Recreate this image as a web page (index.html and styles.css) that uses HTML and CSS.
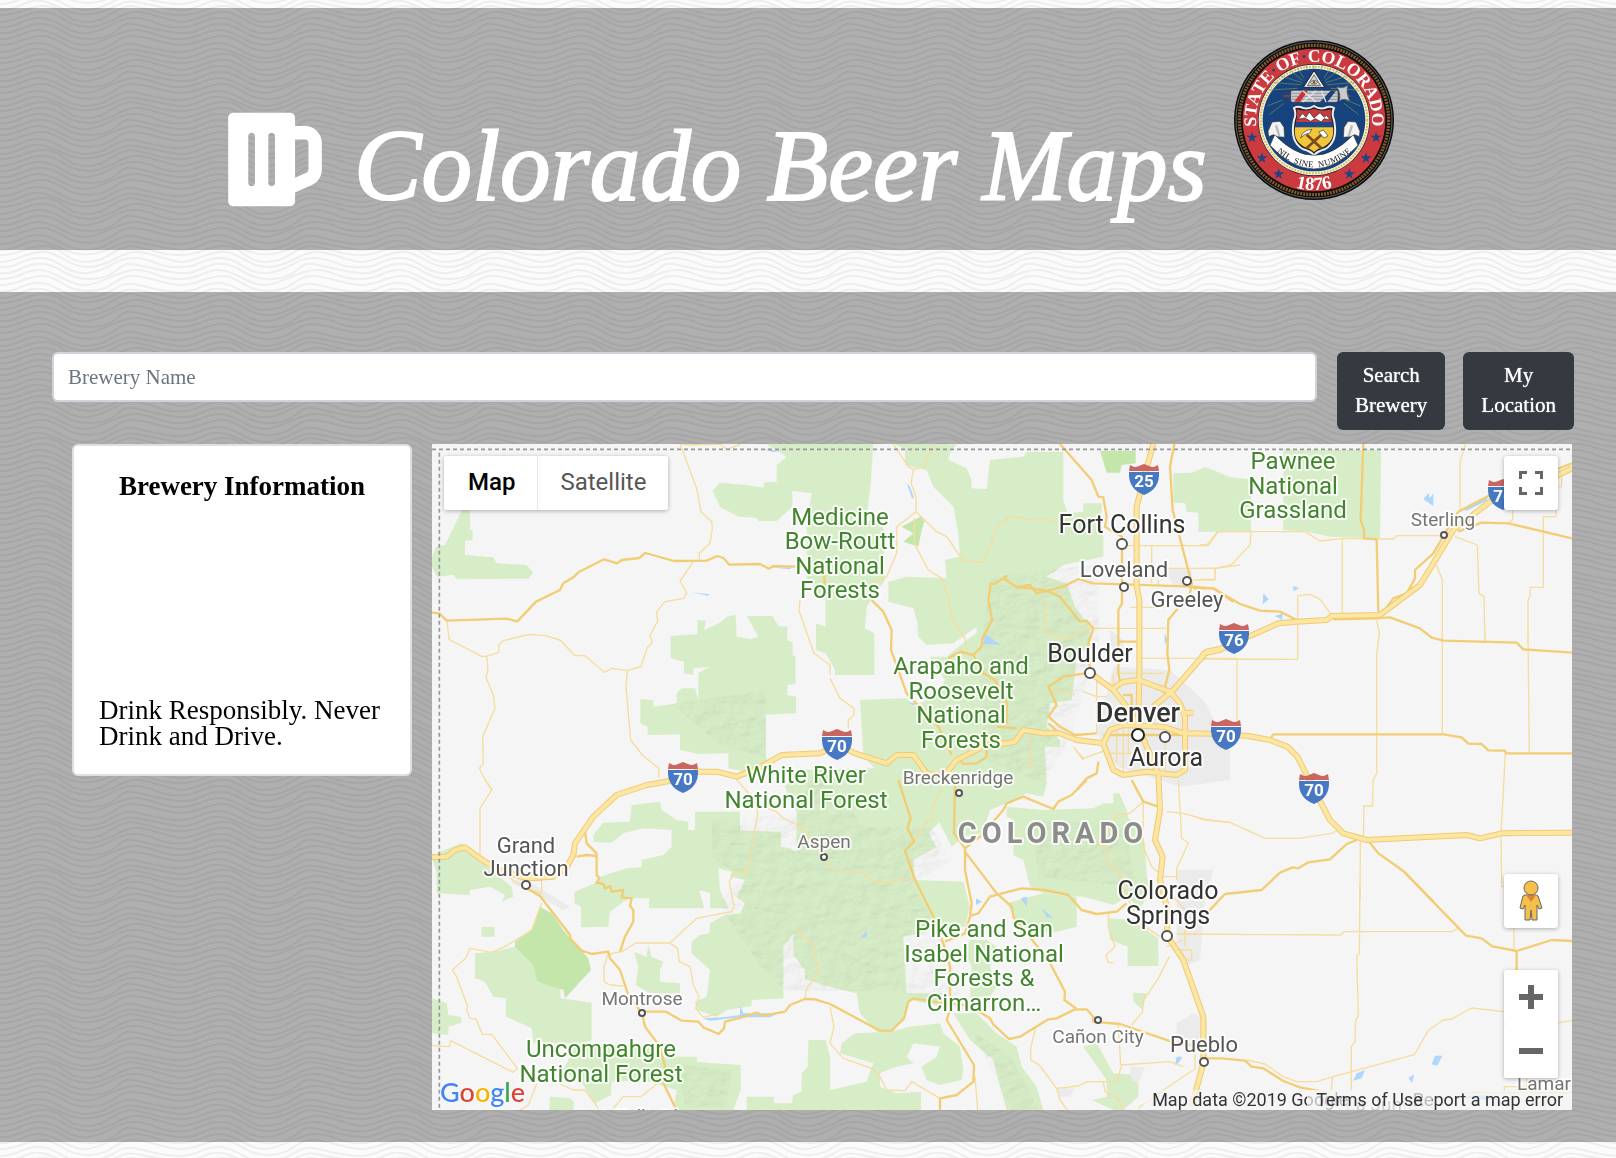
FILE: index.html
```html
<!DOCTYPE html>
<html lang="en">
<head>
<meta charset="utf-8">
<meta name="viewport" content="width=device-width, initial-scale=1">
<title>Colorado Beer Maps</title>
<link rel="stylesheet" href="styles.css">
</head>
<body>
<header class="masthead">
  <h1 class="title"><svg class="mug" viewBox="0 0 448 512" aria-hidden="true"><path fill="#fff" d="M368 96h-48V56c0-13.255-10.745-24-24-24H24C10.745 32 0 42.745 0 56v400c0 13.255 10.745 24 24 24h272c13.255 0 24-10.745 24-24v-42.11l80.606-35.977C429.396 365.063 448 336.388 448 304.86V176c0-44.112-35.888-80-80-80zm16 208.86a16.018 16.018 0 0 1-9.479 14.611L320 343.805V160h48c8.822 0 16 7.178 16 16v128.86zM208 384c-8.836 0-16-7.164-16-16V144c0-8.836 7.164-16 16-16s16 7.164 16 16v224c0 8.836-7.164 16-16 16zm-96 0c-8.836 0-16-7.164-16-16V144c0-8.836 7.164-16 16-16s16 7.164 16 16v224c0 8.836-7.164 16-16 16z"/></svg>Colorado Beer Maps</h1>
  <svg class="seal" viewBox="0 0 480 480" role="img" aria-label="Seal of the State of Colorado">
    <defs>
      <path id="arc-top" d="M77 300a174 174 0 1 1 326 0"/>
      <path id="arc-bottom" d="M30 240a210 210 0 0 0 420 0"/>
      <path id="arc-ribbon" d="M112 304Q240 436 368 304"/>
      <path id="star" d="M0-17 4-5H17L6 3 10 15 0 7-10 15-6 3-17-5H-4Z"/>
    </defs>
    <circle cx="240" cy="240" r="240" fill="#0d0d0d"/>
    <circle cx="240" cy="240" r="234" fill="none" stroke="#8b8b8b" stroke-width="2"/>
    <circle cx="240" cy="240" r="224" fill="none" stroke="#7d5a2c" stroke-width="10" stroke-dasharray="6 3"/>
    <circle cx="240" cy="240" r="214" fill="#cb3a3e"/>
    <circle cx="240" cy="240" r="168" fill="#222"/>
    <circle cx="240" cy="240" r="166" fill="#f7f3e2"/>
    <circle cx="240" cy="240" r="160" fill="none" stroke="#d5b74c" stroke-width="6" stroke-dasharray="5 4"/>
    <circle cx="240" cy="240" r="154" fill="#16427d"/>
    <g stroke="#79944f" stroke-width="2">
      <path d="M205 128 140 108M207 122 158 84M210 114 186 78M275 128 340 108M273 122 322 84M270 114 294 78M200 134 120 128M280 134 360 128M190 145 108 150M290 145 372 150M150 190 106 224M330 190 374 224M145 180 100 198M335 180 380 198M240 86V76M222 92 214 76M258 92 266 76"/>
    </g>
    <path d="M240 92 272 142H208Z" fill="#f6f6f6" stroke="#222" stroke-width="3"/>
    <path d="M240 104 260 137H220Z" fill="#cfcfcf" stroke="#333" stroke-width="2"/>
    <ellipse cx="240" cy="127" rx="10" ry="5" fill="#fff" stroke="#222" stroke-width="2"/><circle cx="240" cy="127" r="4" fill="#7a5530"/>
    <path d="M148 168H348" stroke="#6e4a2c" stroke-width="7"/>
    <rect x="170" y="151" width="142" height="36" rx="6" fill="#c9cbd0" stroke="#333" stroke-width="2"/>
    <path d="M172 160H310M172 169H310M172 178H310" stroke="#777b84" stroke-width="2"/>
    <path d="M180 185 206 152H222L198 186Z" fill="#c8343c"/><path d="M258 186 290 152H306L280 186Z" fill="#1d3f77"/>
    <path d="M206 152 246 186M246 152 206 186M262 152 276 186" stroke="#e4e4e4" stroke-width="4"/>
    <path d="M308 140Q326 148 342 136Q334 156 348 184Q328 172 316 184Q322 160 308 140Z" fill="#c6ccd2" stroke="#555" stroke-width="2"/>
    <path d="M180 204Q190 196 208 204Q224 208 240 198Q256 208 272 204Q290 196 300 204Q292 222 300 240Q314 306 272 328Q250 334 240 346Q230 334 208 328Q166 306 180 240Q188 222 180 204Z" fill="#1f2227" stroke="#eee" stroke-width="6"/>
    <path d="M188 208Q214 216 240 206Q266 216 292 208Q288 222 294 246H186Q192 222 188 208Z" fill="#c93a3e"/>
    <path d="M192 238 206 220 216 232 226 216 240 234 258 218 270 232 278 226 288 240 270 236 262 246 244 236 230 244 212 234Z" fill="#fff" stroke="#222" stroke-width="2"/>
    <path d="M186 246H294L298 262H182Z" fill="#1c4a8c"/>
    <path d="M183 262H297Q302 304 270 320Q250 326 240 336Q230 326 210 320Q178 304 183 262Z" fill="#f1c63a"/>
    <path d="M262 284 216 326M218 284 264 326" stroke="#7b4a22" stroke-width="8"/>
    <path d="M200 294Q206 270 234 268L226 280Q212 280 200 294Z" fill="#fff" stroke="#333" stroke-width="2"/>
    <path d="M254 276 268 270 282 288 270 294Z" fill="#fff" stroke="#333" stroke-width="2"/>
    <path d="M122 284Q240 408 358 284L372 316Q240 458 108 316Z" fill="#fff" stroke="#333" stroke-width="2"/>
    <path d="M102 274 114 246 138 244 150 262 152 292 130 290 118 284 104 290Z" fill="#f3f3f3" stroke="#333" stroke-width="2"/>
    <path d="M378 274 366 246 342 244 330 262 328 292 350 290 362 284 376 290Z" fill="#f3f3f3" stroke="#333" stroke-width="2"/>
    <path d="M126 256 136 288M354 256 344 288" stroke="#bbb" stroke-width="7"/>
    <g fill="#1c4484">
      <use href="#star" x="54" y="292"/><use href="#star" x="84" y="354"/><use href="#star" x="134" y="402"/>
      <use href="#star" x="426" y="292"/><use href="#star" x="396" y="354"/><use href="#star" x="346" y="402"/>
    </g>
    <text class="seal-name"><textPath href="#arc-top" startOffset="50%">STATE<tspan fill="#1c4484">·</tspan>OF<tspan fill="#1c4484">·</tspan>COLORADO</textPath></text>
    <text class="seal-year"><textPath href="#arc-bottom" startOffset="50%">1876</textPath></text>
    <text class="seal-motto" dy="12"><textPath href="#arc-ribbon" startOffset="50%">NIL&#160; SINE&#160; NUMINE</textPath></text>
  </svg>
</header>

<main class="finder">
  <form class="search">
    <input class="search-input" type="text" placeholder="Brewery Name" aria-label="Brewery Name">
    <button class="btn" type="button">Search<br>Brewery</button>
    <button class="btn" type="button">My<br>Location</button>
  </form>
  <div class="results">
    <aside class="card">
      <h2 class="card-title">Brewery Information</h2>
      <p class="card-note">Drink Responsibly. Never Drink and Drive.</p>
    </aside>
    <section class="map" aria-label="Map of Colorado">
      <svg class="layer" viewBox="0 0 3420 1998" preserveAspectRatio="xMidYMid slice" aria-hidden="true">
        <defs>
          <filter id="relief" x="0" y="0" width="100%" height="100%">
            <feTurbulence type="fractalNoise" baseFrequency="0.02 0.03" numOctaves="3" seed="8" result="noise"/>
            <feDiffuseLighting in="noise" surfaceScale="9" lighting-color="#fff" result="light"><feDistantLight azimuth="225" elevation="55"/></feDiffuseLighting>
            <feComposite in="light" in2="SourceAlpha" operator="in"/>
          </filter>
          <g id="hills">
            <path d="M840 1130 1100 1110 1150 960 1300 1150 1500 1150 1560 1250 1440 1320 1540 1500 1600 1700 1400 1640 1260 1640 1060 1640 980 1560 860 1380 930 1300 840 1240Z"/>
            <path d="M1680 400 2000 360 2000 600 1920 860 1840 1020 1660 950 1640 640Z"/>
            <path d="M720 780 1000 740 1000 940 860 900Z"/>
            <path d="M1620 1760 1740 1840 1820 1998H1740Z"/>
            <path d="M740 1860 900 1880 880 1990H760Z"/><path d="M1800 1130 2080 1140 2110 1330 1820 1300Z"/>
          </g>
        </defs>
        <g class="park">
          <g transform="translate(-6 -12)">
            <path d="M96 210H120V270H128V300L105 302V345L190 352 200 370 290 375 310 398 295 416 80 418 70 405 20 410 6 380V350L18 320 45 315Z"/>
            <path d="M1010 12H1330L1322 130 1310 240 1360 250 1365 420 1310 500 1305 565 1333 580V705H1215V690L1187 640 1158 630V550L1187 560V480L1130 420V250L1145 160 1087 153V200L1040 243H985L980 233 925 230 870 200 847 152 870 128 950 135 1000 143 1003 127 1040 125V75L1070 50Z"/>
            <path d="M722 588 802 583V540L828 542 822 570 870 548 890 530 917 524 920 590 960 597 985 590 950 528H1027L1045 558 1072 560V600L1088 607V645L1097 650V732L1072 735V765L1098 770V820L1008 824V945L1012 975 985 980 970 1000 895 985V940L808 942 750 930V883L653 885V860L631 850V778L670 780V800L740 790V760L755 745H795L805 780V700L840 680 790 685V705L762 700V665L722 655Z"/>
          </g>
          <g transform="translate(1194 -12)">
            <path d="M195 12H380L360 40 355 60 410 85 425 120V145L470 147 480 60 580 50 590 35H700V180L713 220 760 215V190H815V255L820 290V350L700 375 650 410 710 430 735 500 780 560V620L740 640 735 700 725 780 660 790 650 860 690 900V920H645L650 1030 640 1070 590 1060 530 1090 480 1110 460 1180 400 1190 365 1220 330 1150 300 1050H200L100 950 90 780 230 775 250 800 330 760 345 720 300 650H350L410 600 440 580V560L370 610 290 615 265 590 262 545 250 505 175 485V425L230 410 350 415 345 360 390 350 385 280 370 200 310 140 290 90 225 75V30Z"/>
            <path d="M1030 100 1085 98 1125 82 1155 92 1200 112 1263 118V275H1105V218L1070 215 1065 190 1030 188Z"/>
            <path class="park-deep" d="M810 32H917V70L875 75 870 98H830ZM215 260 275 228 283 245 275 270 265 320 220 305 250 280Z"/>
          </g>
          <path transform="translate(2304 -342)" d="M250 360H543L540 625 390 620 320 605 250 600Z"/>
          <g transform="translate(-6 1008)">
            <path d="M490 165 520 128 600 125 605 75 690 65 695 90 740 120 775 125V150H725L640 145 580 160 545 188 490 185Z"/>
            <path d="M795 95H930V152L1053 155V200L1080 205 1100 220V95L1064 20 1110 -30 1530 -40 1535 120 1495 160 1520 200 1450 240 1455 300 1600 305 1620 380 1605 440 1500 450 1420 470 1430 640 1540 640V680L1440 660 1420 720 1380 755H1340L1290 700 1280 640 1200 620 1125 598V570L1090 525V460L1060 500V655L965 660V678L890 690 860 710 800 690 795 665 830 650 840 570 785 520V485L810 465 838 460 840 430 885 405 930 400 945 370 920 350 945 300 900 290 905 275 865 265 870 330 895 385H840V340L808 330 822 385H657V355H600L580 365 540 395 535 440 453 442V380L433 370V335L490 312 510 290 590 265 635 262V240L700 225 725 200V150H795Z"/>
            <path d="M135 520 190 515 255 500 322 560V608L390 615 392 655 485 668V780L460 790H310L305 745 228 710V655L190 650 165 605 135 595Z"/>
            <path d="M30 215 95 190 125 205 170 260 245 320 250 350 215 365 225 345 180 320 120 330 118 345 20 340V280L6 230Z"/>
            <path d="M155 441H194V470H155ZM612 515 650 530 655 495 665 530 700 545 690 570V605L750 610V640H660L617 615 625 560ZM6 655 50 670 55 705 92 710 95 728 55 740V765L6 760ZM360 950 420 955 432 965 430 990H358Z"/>
            <path d="M440 790 690 800V830H800V845L850 850 932 855V930L910 990H730L740 930 640 900 545 905 543 945 495 970 460 915 400 870Z"/>
            <path d="M1135 780H1187L1200 830V990H950V950H1030L1032 970H1085L1090 945 1115 935V880L1133 860Z"/>
            <path class="park-deep" d="M330 380 365 400 400 450 420 475 475 535 483 570 405 655 400 630 322 605 310 555 255 500V485L305 450Z"/>
          </g>
          <g transform="translate(1194 1008)">
            <path d="M240 740 330 730 340 760 390 800 400 870 395 900 330 915 290 900 275 860 320 830 330 800 250 790 230 830 250 850 200 860 150 880V920L200 940 273 935V990H0V930L110 905 130 850 30 820 35 790 75 760 180 755Z"/>
            <path d="M370 700H440L500 760 560 800 575 860 620 920 640 990H530L510 920 490 840 420 780ZM420 480H470L500 500 480 560 500 620 480 650H420L425 560 405 520Z"/>
            <path d="M530 80 640 90 790 85 820 70H850V40H868L890 90 895 115 915 125 945 190 950 290 965 330 930 385 890 350 850 375 760 350 640 340 600 320 580 240 550 225V120L530 110Z"/>
            <path d="M530 370 640 340 740 350V440L680 455 600 460 560 420ZM835 415 910 420 935 440 985 475V558H893V500L840 480ZM910 638 950 640 938 690 910 665ZM760 800 800 790 850 880 925 885V950L880 990H850L785 960 830 950V900Z"/>
          </g>
        </g>
        <g class="town">
          <path transform="translate(1194 -12)" d="M850 680 1020 690 1120 780 1200 930V1020L1050 1040 860 980 800 880ZM1000 380 1085 390 1090 440 1030 435ZM840 570 880 600V640L840 620Z"/>
          <path transform="translate(1194 1008)" d="M1040 270H1150L1125 350 1110 540 1060 560 1040 480ZM1040 730 1090 700 1130 720V800H1040ZM900 860H945L925 910 905 900ZM680 925H735L720 950H690Z"/>
          <path transform="translate(-6 1008)" d="M240 305 280 295 420 380 400 390 300 335Z"/>
        </g>
        <use class="hills" href="#hills" filter="url(#relief)"/>
        <g class="water">
          <path transform="translate(1194 -12)" d="M465 582 512 615 460 612ZM1003 580 1012 600 1005 615ZM230 130 240 140 252 175 246 175ZM235 787 258 790 250 797ZM360 985 378 970 372 985Z"/>
          <path transform="translate(2304 -342)" d="M685 490 690 505 700 490V528L670 508ZM280 768 298 775 280 784ZM190 790 206 808 188 823ZM225 858 248 850 246 870ZM790 540 865 498 860 512 800 542Z"/>
          <path transform="translate(2304 1218)" d="M705 617H727L712 647 695 643ZM460 692 470 670 495 660 485 685ZM625 685 642 673 637 698ZM780 740 860 735 900 750 820 748Z"/>
          <path transform="translate(-6 1008)" d="M820 715 880 712 930 705V675L940 700H1045L1020 712H930L840 722Z"/>
          <path transform="translate(1194 1008)" d="M438 355 456 365 438 375ZM572 355 592 350 590 380ZM635 385 670 415 650 412ZM92 472 110 452V472ZM1040 830H1058L1045 850 1035 855ZM215 300 240 295 235 303Z"/>
          <path transform="translate(-6 -12)" d="M1000 28 1055 32 1030 36ZM1022 382 1085 383 1080 388ZM788 457 838 463 834 467Z"/>
        </g>
        <g class="road-minor">
          <path transform="translate(-6 -12)" d="M750 12 800 145 813 215 845 245 847 265 840 310 808 340V360M790 365 750 423 770 458 762 475 705 485 680 515 683 543 660 587 667 608 652 622 633 680 592 692 545 685 523 697 465 647H435L390 600 345 587 295 584 220 602 206 615V637L170 649H155L57 598 51 543M170 649 174 690 168 712 190 765 195 805 158 890 160 970 148 985 160 1010 187 1050M592 692 588 740 602 900 637 945 686 985V1015M1110 480 1107 512 1152 640 1200 675V705M755 12 780 15 870 12 890 28 930 14"/>
          <path transform="translate(1194 -12)" d="M190 12 235 80 250 88 285 80 290 50 320 15M250 88 243 130 258 170V215L200 260V340L170 410 120 430M258 215 320 275 350 290 398 360 460 367 505 255 540 228 590 238 650 235 680 250 710 240M253 235V310L295 390 335 415 355 470 365 535 405 595 412 635M0 715 30 775 72 805V825L55 840V865M890 317H1135L1165 275H1230M965 317V430M1000 385H1155V420H1090M1155 385 1230 375M900 502H1015M790 565H1010M930 655H1220M645 480V575L710 597 790 560M985 420V440M800 700V880M850 700V740M830 940H980M860 700H1000M760 960 730 920M730 920 760 955 830 930M860 870V970M880 860V1000M895 860V940M1005 890V1000M960 930V1000M830 770H800L760 755M660 750 710 755 735 765M600 890 605 980 585 985"/>
          <path transform="translate(2304 -342)" d="M0 645 22 643 52 605H315L360 633 430 625 580 627 592 617H730M427 625V860M0 715H45V748H0M45 715 93 705 150 645 153 605M293 860V797L330 793 360 808 395 855M797 342 780 395V545M765 620 832 645 837 790 852 800 855 940M710 705 727 750V940M1085 435V470H1075M938 540V570L925 578M1068 540V560H1030V772H990V800L984 810V940"/>
          <path transform="translate(2304 468)" d="M293 50V178L10 177M111 178V365M530 60 538 100 530 165V520L520 540 517 618H492L490 710M727 100V400M855 100V125M984 100 988 460M916 460 903 700 905 860H915M0 657 90 667 195 715H297L395 700 415 690M481 725 480 900"/>
          <path transform="translate(2304 1218)" d="M480 100 478 310 470 318 475 500 467 510 465 575 454 590V725M-60 252 422 255 432 245H755L775 235M942 235V300M140 630 195 642 250 680 290 695H350L400 680 643 614 686 540 730 510 755 507 815 474 912 485M1075 518 1116 512M398 680 393 725M913 725V710H980V685M780 728H1116M1035 735V780"/>
          <path transform="translate(-6 1008)" d="M165 0 185 30 150 85V235M335 370 305 450 225 500 185 517 120 505 107 535 67 570 80 590 113 680 110 690 120 715 138 717 157 763H185L262 865 250 877 62 782 58 800 6 797M335 300V340L290 325M320 912 295 975 270 990M540 522 575 515 618 489H720L800 415 905 395 912 380 898 305 915 275 945 272 950 285 983 100 975 60 920 0M720 490 742 505 748 545 780 560 790 615 807 650 797 685 820 712 870 700M535 520 522 560V605L540 615 580 618M1000 80 1040 95 1060 115 1115 140 1200 260M390 912 430 930H465L505 985M550 985 580 950H632L680 912M1095 445 1150 495 1167 575 1130 625 1125 657M180 250 270 315"/>
          <path transform="translate(1194 1008)" d="M0 262 30 275 100 278 125 300 165 312 205 300 250 298M335 25 305 90 310 120 290 125 253 180M0 680 12 740 0 790 40 835 125 865 150 890 170 930 225 932 245 905 330 955M435 890 443 990M617 740 602 805V840L628 855 680 925 745 918 770 905H860L875 855 1020 845 1060 860M680 925 690 960 712 990M820 905 825 935 865 955 880 990M865 735 872 855M905 735 938 695V665L985 595 1018 530M835 395V440L855 500 828 525 835 548H850M940 65 900 100 862 105 805 190 830 205 835 250 865 270 890 350 930 430 990 470M940 65V200L965 260 1000 290H1040M1010 95 1060 100 1130 120 1200 127M1045 0 1055 175 1075 190 1040 265V300M1040 462H1100M1090 870 1000 930 925 985M1030 350 1065 390V500M1010 500 1060 480M1050 510H1085V540H1060M1095 780V870"/>
        </g>
        <g class="road-major">
          <path transform="translate(-6 -12)" d="M6 518 28 520 50 542 230 536 262 544 318 485 390 450 400 430 430 412 445 397 522 358 562 370 575 360 628 354 646 339 732 363 830 362 862 348 880 354 898 374 990 372 1017 386 1030 378 1090 380 1180 378 1185 440"/>
          <path transform="translate(1194 -12)" d="M690 12 785 120 805 170 820 172 830 230 825 260 876 290V490L865 510V700L870 725M1033 12 1020 80 1028 210 1085 430 1080 460 1015 540 1012 640 1018 690 1000 760M430 645 455 620 457 595 487 540 475 480 482 430 492 433 530 408 525 418 560 442 600 435 620 460 700 440 745 417 790 430 1085 440 1150 445 1210 485M560 442 600 445 650 452 690 470 750 545 770 542 790 565 775 610 780 698 700 710 655 740 680 795 655 830 690 860 735 885 800 880M655 850 700 890M125 480 160 515 185 570 183 630 230 760 325 860 365 945M355 655 390 635 430 645 460 700 495 720 530 790V850M500 860 560 865M390 960 400 972 440 970 470 950V925M740 1050 770 1015 800 1000 805 965M865 605H920M820 885H1060M880 765H905V860"/>
          <path transform="translate(2304 -342)" d="M490 342 482 570 492 600V625L530 628 535 845M535 865 580 805 620 790 645 745V720L700 670 732 615 775 545 870 495 1116 400M775 605 845 578 925 580 1116 625M-20 775H40L120 822 180 842 240 845 290 870"/>
          <path transform="translate(2304 468)" d="M400 58 530 55 570 52 660 85 695 113 730 122 950 128 970 148 1116 158M212 415 220 403H730L785 412 805 431 845 432 865 451 915 452 918 460H1116M470 720 440 732 390 778 325 787 295 805 278 802 240 818 185 870 75 882 20 940M505 722 535 760 610 813 700 905"/>
          <path transform="translate(2304 1218)" d="M610 63 798 257 845 265 877 289 950 303 1055 270 1116 273M950 303V380M0 625H65L135 632 155 650 190 655 250 693 300 712 395 730"/>
          <path transform="translate(-6 1008)" d="M465 155 470 190 500 220V285L508 295 500 308 520 312 525 325 540 318 545 335 580 330 575 352 605 355 600 378 610 390V425L585 470 570 515M440 230 470 225 500 228M290 325 330 348 420 465V475L455 512 485 522 535 515 540 535 570 570 595 645 636 700 645 740 690 800 705 860 700 910 737 985M636 695H708L755 722 805 725 820 742 866 762 882 745 885 725 925 715 980 698 1000 707 1065 695 1080 675 1125 657 1155 658 1200 672M200 268 290 300 335 298"/>
          <path transform="translate(1194 1008)" d="M0 672 150 752H185L222 715 235 665 250 655 330 668 400 675 450 697 480 715 490 733 537 777 570 770 655 718 680 715 735 688H770L790 710V725L870 732 1040 790 1110 800M205 0 242 115 232 145 253 185 225 212 255 300 310 410 340 490 360 560V690L350 720 432 855 430 905 380 945 330 955V990M375 0 372 160 405 205V270L425 370 420 410 405 460 345 485M405 215 500 340 545 380 550 410 655 540 705 635 703 660 738 685M420 408 445 400 480 350 575 325 645 330 715 345 755 390 800 402 860 395 890 370M405 205 450 170 520 90 530 70 580 50 670 87 685 65 725 45 770 0M905 0 940 65 985 80"/>
        </g>
        <defs>
          <g id="interstates">
            <path transform="translate(-6 1008)" d="M6 232 50 230 75 210 105 202 150 235 200 268 290 295 370 290 410 262 430 225 435 190 490 110 560 45 650 15 720 3 800 -25 860 -25 920 -10 985 -35 1055 -75 1170 -80 1222 -107 1275 -80 1370 -50 1400 -75H1450L1490 -20 1540 -10 1580 -60 1650 -95 1680 -130 1720 -108 1755 -115 1780 -150 1840 -140H1890L1940 -120 2020 -110 2040 -150 2080 -165 2200 -160 2260 -140 2388 -138"/>
            <path transform="translate(2304 468)" d="M78 403 145 408 210 420 262 440 292 470 341 567 390 660 430 700 500 720 800 705 840 715 905 700 1116 698"/>
            <path transform="translate(1194 -12)" d="M970 12 940 120 920 200V440L928 480V700L925 860 950 920 985 1000 990 1110 975 1200 998 1250 990 1320 1010 1400 1012 1488 1060 1560 1120 1730V1870L1085 1998M970 800 1030 750 1130 635 1200 620 1210 610M780 698 850 750 890 800 930 860M850 745 880 725 925 720 1020 755 1050 790 1065 830V990L1040 1005 950 995 880 1005 850 990 820 910M1055 818H1090"/>
            <path transform="translate(2304 468)" d="M0 180 12 160 60 150 103 117 150 108 235 70 290 65 380 60 395 48 540 45 660 -45 700 -110 760 -210 870 -295 1000 -340 1116 -395"/>
          </g>
        </defs>
        <use href="#interstates" class="interstate-edge"/>
        <use href="#interstates" class="interstate"/>
        <path d="M0 16H3420M22 26V1998" fill="none" stroke="#999" stroke-width="5" stroke-dasharray="12 9"/>
      </svg>

      <svg class="layer labels" viewBox="0 0 1140 666" preserveAspectRatio="xMidYMid slice">
        <defs>
          <symbol id="shield" viewBox="0 0 30 30" overflow="visible">
            <path d="M1 0 3 1Q6 3 10 1L15 -1 20 1Q24 3 27 1L29 0 30 6H0Z" fill="#cb6560"/>
            <path d="M0 7H30Q31 24 15 30Q-1 24 0 7Z" fill="#4678c3"/>
          </symbol>
        </defs>
        <g class="pins">
          <circle cx="690" cy="100" r="5"/><circle cx="692" cy="143" r="4"/><circle cx="755" cy="137" r="4"/><circle cx="658" cy="229" r="5"/><circle cx="733" cy="293" r="5"/><circle cx="94" cy="441" r="4"/><circle cx="735" cy="492" r="5"/><circle cx="772" cy="618" r="4"/>
          <circle cx="527" cy="349" r="3"/><circle cx="1012" cy="91" r="3"/><circle cx="210" cy="569" r="3"/><circle cx="392" cy="413" r="3"/><circle cx="666" cy="576" r="3"/>
          <circle class="pin-capital" cx="706" cy="291" r="6"/>
        </g>
        <g class="shields">
          <use href="#shield" x="697" y="21" width="30" height="30"/><text x="712" y="43">25</text>
          <use href="#shield" x="787" y="180" width="30" height="30"/><text x="802" y="202">76</text>
          <use href="#shield" x="779" y="276" width="30" height="30"/><text x="794" y="298">70</text>
          <use href="#shield" x="867" y="330" width="30" height="30"/><text x="882" y="352">70</text>
          <use href="#shield" x="236" y="319" width="30" height="30"/><text x="251" y="341">70</text>
          <use href="#shield" x="390" y="286" width="30" height="30"/><text x="405" y="308">70</text>
          <use href="#shield" x="1056" y="36" width="30" height="30"/><text x="1071" y="58">76</text>
        </g>
        <g class="forest">
          <text x="408" y="81">Medicine</text><text x="408" y="105">Bow-Routt</text><text x="408" y="130">National</text><text x="408" y="154">Forests</text>
          <text x="861" y="25">Pawnee</text><text x="861" y="50">National</text><text x="861" y="74">Grassland</text>
          <text x="529" y="230">Arapaho and</text><text x="529" y="255">Roosevelt</text><text x="529" y="279">National</text><text x="529" y="304">Forests</text>
          <text x="374" y="339">White River</text><text x="374" y="364">National Forest</text>
          <text x="552" y="493">Pike and San</text><text x="552" y="518">Isabel National</text><text x="552" y="542">Forests &amp;</text><text x="552" y="567">Cimarron…</text>
          <text x="169" y="613">Uncompahgre</text><text x="169" y="638">National Forest</text>
        </g>
        <text class="state" x="621" y="399">COLORADO</text>
        <g class="city">
          <text x="690" y="89">Fort Collins</text><text x="658" y="218">Boulder</text><text x="734" y="322">Aurora</text>
          <text x="736" y="455">Colorado</text><text x="736" y="480">Springs</text>
          <text class="capital" x="706" y="278">Denver</text>
        </g>
        <g class="mid-town">
          <text x="692" y="133">Loveland</text><text x="755" y="163">Greeley</text><text x="94" y="409">Grand</text><text x="94" y="432">Junction</text><text x="772" y="608">Pueblo</text>
        </g>
        <g class="small-town">
          <text x="526" y="340">Breckenridge</text><text x="1011" y="82">Sterling</text><text x="210" y="561">Montrose</text><text x="392" y="404">Aspen</text><text x="666" y="599">Cañon City</text><text x="1112" y="646">Lamar</text><text x="220" y="679">Telluride</text><text x="950" y="667">La Junta</text>
        </g>
      </svg>

      <div class="map-types">
        <button class="map-type map-type-on" type="button">Map</button>
        <button class="map-type" type="button">Satellite</button>
      </div>
      <button class="control fullscreen" type="button" aria-label="Toggle fullscreen view">
        <svg width="24" height="24" viewBox="0 0 24 24" fill="#666"><path d="M0 0H8V3H3V8H0ZM16 0H24V8H21V3H16ZM21 16H24V24H16V21H21ZM0 16H3V21H8V24H0Z"/></svg>
      </button>
      <div class="side-controls">
        <button class="control" type="button" aria-label="Street View">
          <svg width="24" height="42" viewBox="0 0 24 42" fill="#f6bf4a" stroke="#666" stroke-width="1"><path d="M6 15 4 16 1 28 4 29 6 25V40H11L12 30 13 40H18V25L20 29 23 28 19 16 17 15Z"/><path d="M7 15H17L12 22Z" fill="#d9843b" stroke="none"/><circle cx="12" cy="8" r="7"/></svg>
        </button>
        <div class="zoom">
          <button class="control" type="button" aria-label="Zoom in"><svg width="24" height="24" viewBox="0 0 24 24" fill="#666"><path d="M0 9H9V0H15V9H24V15H15V24H9V15H0Z"/></svg></button>
          <button class="control" type="button" aria-label="Zoom out"><svg width="24" height="24" viewBox="0 0 24 24" fill="#666"><path d="M0 9H24V15H0Z"/></svg></button>
        </div>
      </div>
      <a class="logo" href="#"><span class="g-blue">G</span><span class="g-red">o</span><span class="g-yellow">o</span><span class="g-blue">g</span><span class="g-green">l</span><span class="g-red">e</span></a>
      <div class="credits">
        <span class="credit credit-data">Map data ©2019 Google</span>
        <a class="credit credit-terms" href="#">Terms of Use</a>
        <a class="credit credit-report" href="#">Report a map error</a>
      </div>
    </section>
  </div>
</main>
</body>
</html>
```
FILE: styles.css
```css
* { box-sizing: border-box; }

body {
  margin: 0;
  padding: 8px 0 16px;
  font-family: "Liberation Serif", "Times New Roman", serif;
  color: #000;
  background-color: #fbfbfb;
  background-image: url("data:image/svg+xml,%3Csvg xmlns='http://www.w3.org/2000/svg' width='180' height='48' viewBox='0 0 180 48'%3E%3Cg fill='none' stroke='%23eeeeee' stroke-width='2'%3E%3Cpath d='M0 4C20 4 22-6 40-5S66 11 88 10S118-7 134-4S160 4 180 4M0 52C20 52 22 42 40 43S66 59 88 58S118 41 134 44S160 52 180 52'/%3E%3Cpath d='M0 10C16 12 26-2 42 1S70 17 92 14S120-1 136 2S164 8 180 10'/%3E%3Cpath d='M0 15C20 16 24 6 44 6S64 22 86 22S116 6 130 6S162 16 180 15'/%3E%3Cpath d='M0 22C14 23 30 10 46 12S70 28 90 27S122 11 138 12S164 20 180 22'/%3E%3Cpath d='M0 27C20 28 20 18 40 18S66 35 88 33S114 18 134 18S160 29 180 27'/%3E%3Cpath d='M0 33C18 35 26 22 44 24S66 40 92 39S118 22 132 24S164 32 180 33'/%3E%3Cpath d='M0 39C20 40 24 29 40 30S70 46 86 45S120 29 138 30S160 40 180 39'/%3E%3Cpath d='M0 45C16 46 28 35 44 36S66 52 90 51S116 35 134 36S162 44 180 45M0-3C16-2 28-13 44-12S66 4 90 3S116-13 134-12S162-4 180-3'/%3E%3C/g%3E%3C/svg%3E");
}

h1, h2, p { margin: 0; }

.masthead {
  display: flex;
  justify-content: center;
  align-items: baseline;
  min-height: 242px;
  padding-top: 32px;
  padding-left: 6px;
  background: rgba(0, 0, 0, .3);
}

.mug { width: 94px; height: 107px; margin-right: 32px; vertical-align: -13px; }

.title {
  font-family: "Apple Chancery", "Monotype Corsiva", "Liberation Serif", serif;
  font-size: 101px;
  font-style: italic;
  font-weight: 400;
  line-height: 128px;
  color: #fff;
  white-space: nowrap;
  -webkit-text-stroke: 2px #fff;
}

.seal { width: 160px; height: 160px; margin-left: 27px; }
.seal text { font-family: "Liberation Serif", serif; text-anchor: middle; }
.seal-name { font-size: 53px; font-weight: 700; fill: #fff; }
.seal-year { font-size: 56px; font-weight: 700; fill: #fff; }
.seal-motto { font-size: 26px; fill: #111; }

.finder {
  margin-top: 42px;
  padding: 60px 42px 32px 52px;
  background: rgba(0, 0, 0, .3);
}

.search { display: flex; align-items: flex-start; gap: 18px; }

.search-input {
  flex: 1;
  min-width: 0;
  height: 50px;
  margin-right: 2px;
  padding: 0 14px;
  font: 21px "Liberation Serif", serif;
  border: 2px solid #ced4da;
  border-radius: 6px;
}
.search-input::placeholder { color: #6c757d; opacity: 1; }

.btn {
  padding: 8px 18px 10px;
  font: 21px/30px "Liberation Serif", serif;
  color: #fff;
  text-shadow: 0 0 1px #fff;
  background: #343a40;
  border: 0;
  border-radius: 6px;
}

.results {
  display: flex;
  align-items: flex-start;
  gap: 20px;
  margin: 14px 2px 0 20px;
}

.card {
  display: flex;
  flex-direction: column;
  justify-content: space-between;
  flex: 0 0 340px;
  min-height: 332px;
  padding: 25px;
  background: #fff;
  border: 2px solid #dfdfdf;
  border-radius: 6px;
}
.card-title { font-size: 27px; line-height: 30px; text-align: center; }
.card-note { font-size: 27px; line-height: 26px; }

.map {
  position: relative;
  flex: 1;
  aspect-ratio: 1140 / 666;
  overflow: hidden;
  font-family: Roboto, sans-serif;
  background: #f5f5f5;
}
.layer { position: absolute; inset: 0; width: 100%; height: 100%; }
.layer path { stroke-linejoin: round; }

.park { fill: #d7edc7; }
.park-deep { fill: #c4e6ab; }
.town { fill: #ebebeb; }
.water { fill: #afd6fb; }
.hills { opacity: .18; mix-blend-mode: multiply; }
.road-minor { fill: none; stroke: #f6dd9d; stroke-width: 4; }
.road-major { fill: none; stroke: #f2cd73; stroke-width: 7; }
.interstate-edge { fill: none; stroke: #eecb76; stroke-width: 18; }
.interstate { fill: none; stroke: #fce6a2; stroke-width: 12; }

.labels text { text-anchor: middle; paint-order: stroke; stroke: #fff; stroke-opacity: .8; stroke-width: 4px; stroke-linejoin: round; }
.labels .shields text { font-size: 17px; font-weight: 700; fill: #fff; stroke: none; }
.forest { font-size: 24px; fill: #43852f; }
.state { font-size: 29px; font-weight: 700; letter-spacing: 5px; fill: #8c8c8c; }
.city { font-size: 25px; fill: #333; }
.capital { font-size: 27px; font-weight: 500; }
.mid-town { font-size: 22px; fill: #555; }
.small-town { font-size: 19px; fill: #757575; }
.pins { fill: #fff; stroke: #555; stroke-width: 2; }
.pin-capital { stroke: #222; }

.map button { font-family: inherit; cursor: pointer; }

.map-types {
  position: absolute;
  top: 12px;
  left: 12px;
  display: flex;
  border-radius: 3px;
  box-shadow: 0 1px 4px rgba(0, 0, 0, .3);
}
.map-type {
  height: 54px;
  padding: 0 22px 2px;
  font-size: 24px;
  color: #565656;
  background: #fff;
  border: 0;
  border-left: 1px solid #e6e6e6;
  border-radius: 0 3px 3px 0;
}
.map-type-on { padding-left: 24px; font-weight: 500; color: #000; border-left: 0; border-radius: 3px 0 0 3px; }

.control {
  display: grid;
  place-items: center;
  width: 54px;
  height: 54px;
  padding: 0;
  background: #fff;
  border: 0;
  border-radius: 3px;
  box-shadow: 0 1px 4px rgba(0, 0, 0, .3);
}
.fullscreen { position: absolute; top: 12px; right: 14px; }
.side-controls { position: absolute; right: 14px; bottom: 32px; display: grid; gap: 42px; }
.zoom { border-radius: 3px; box-shadow: 0 1px 4px rgba(0, 0, 0, .3); }
.zoom .control { box-shadow: none; }

.logo {
  position: absolute;
  left: 8px;
  bottom: 2px;
  font: 500 27px/32px Lato, sans-serif;
  text-decoration: none;
  text-shadow: 0 0 3px #fff;
}
.g-blue { color: #4285f4; }
.g-red { color: #db4437; }
.g-yellow { color: #f4b400; }
.g-green { color: #3aa757; }

.credits {
  position: absolute;
  right: 0;
  bottom: 0;
  display: flex;
  font-size: 18px;
  line-height: 20px;
  white-space: nowrap;
}
.credit { padding: 0 9px; color: #333; text-decoration: none; background: rgba(245, 245, 245, .7); }
.credit-terms { z-index: 1; margin: 0 -28px 0 -50px; }
```
